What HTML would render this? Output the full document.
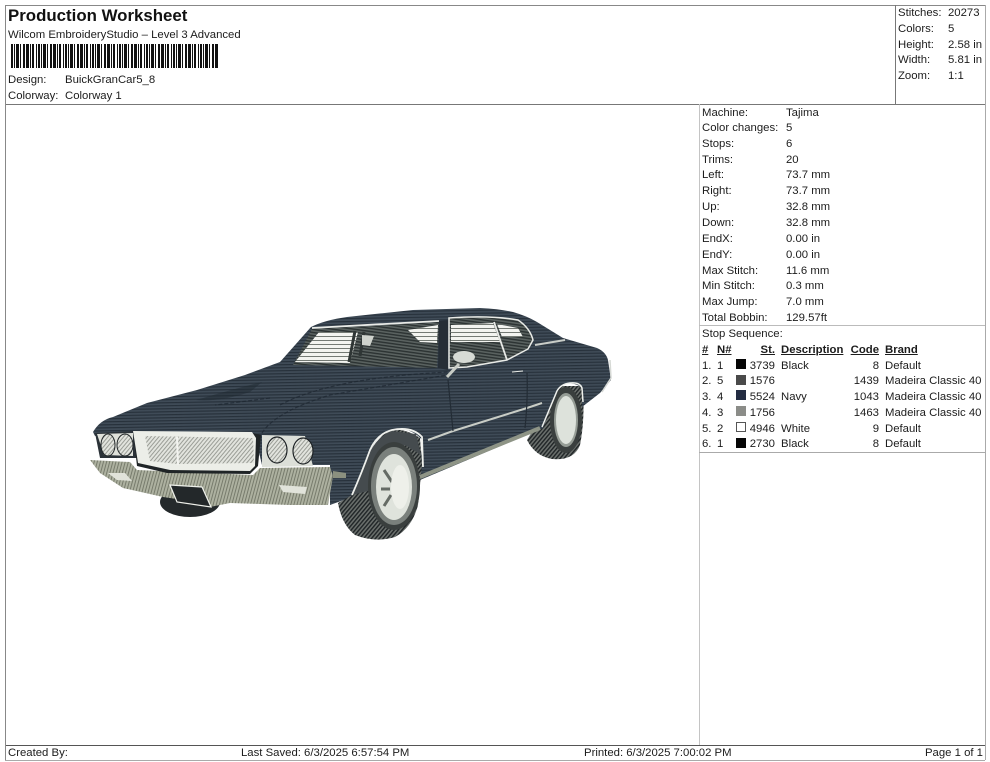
<!DOCTYPE html>
<html><head><meta charset="utf-8"><style>
html,body{margin:0;padding:0;background:#fff}
#p{position:relative;width:990px;height:762px;overflow:hidden;background:#fff;font:11.35px/14px "Liberation Sans",sans-serif;color:#1c1c1c;filter:blur(.3px)}
#p span{position:absolute;white-space:nowrap;margin-top:1px}
#p span.f{margin-top:0}
.l{position:absolute;background:#777}
.r{text-align:right}
b{font-weight:700}
.sw{position:absolute;width:10px;height:10px;box-sizing:border-box}
#bar{position:absolute;left:11px;top:44px;width:208px;height:24px;background:repeating-linear-gradient(90deg,#111 0 2px,#fff 2px 3px,#111 3px 4px,#fff 4px 5px,#111 5px 8px,#fff 8px 9px,#111 9px 10px,#fff 10px 12px,#111 12px 14px,#fff 14px 15px,#111 15px 18px,#fff 18px 19px,#111 19px 20px,#fff 20px 21px,#111 21px 23px,#fff 23px 25px,#111 25px 26px,#fff 26px 27px)}
u{text-decoration:underline}
</style></head><body><div id="p">
<div class="l" style="left:5px;top:5px;width:980px;height:1px;background:#888"></div>
<div class="l" style="left:5px;top:104px;width:980px;height:1px"></div>
<div class="l" style="left:5px;top:745px;width:980px;height:1px;background:#555"></div>
<div class="l" style="left:5px;top:760px;width:980px;height:1px;background:#aaa"></div>
<div class="l" style="left:5px;top:5px;width:1px;height:755px;background:#888"></div>
<div class="l" style="left:985px;top:5px;width:1px;height:755px;background:#aaa"></div>
<div class="l" style="left:895px;top:5px;width:1px;height:99px"></div>
<div class="l" style="left:699px;top:104px;width:1px;height:641px;background:#c4c4c4"></div>
<div class="l" style="left:699px;top:325px;width:286px;height:1px;background:#bbb"></div>
<div class="l" style="left:699px;top:452px;width:286px;height:1px;background:#aaa"></div>

<span style="left:8px;top:5px;font-size:16.85px;line-height:19px;font-weight:700;color:#111">Production Worksheet</span>
<span style="left:8px;top:27px">Wilcom EmbroideryStudio – Level 3 Advanced</span>
<div id="bar"></div>
<span style="left:8px;top:72px">Design:</span><span style="left:65px;top:72px">BuickGranCar5_8</span>
<span style="left:8px;top:88px">Colorway:</span><span style="left:65px;top:88px">Colorway 1</span>

<span style="left:898px;top:5px">Stitches:</span><span style="left:948px;top:5px">20273</span>
<span style="left:898px;top:21px">Colors:</span><span style="left:948px;top:21px">5</span>
<span style="left:898px;top:37px">Height:</span><span style="left:948px;top:37px">2.58 in</span>
<span style="left:898px;top:52px">Width:</span><span style="left:948px;top:52px">5.81 in</span>
<span style="left:898px;top:68px">Zoom:</span><span style="left:948px;top:68px">1:1</span>

<span style="left:702px;top:105px">Machine:</span><span style="left:786px;top:105px">Tajima</span>
<span style="left:702px;top:120px">Color changes:</span><span style="left:786px;top:120px">5</span>
<span style="left:702px;top:136px">Stops:</span><span style="left:786px;top:136px">6</span>
<span style="left:702px;top:152px">Trims:</span><span style="left:786px;top:152px">20</span>
<span style="left:702px;top:167px">Left:</span><span style="left:786px;top:167px">73.7 mm</span>
<span style="left:702px;top:183px">Right:</span><span style="left:786px;top:183px">73.7 mm</span>
<span style="left:702px;top:199px">Up:</span><span style="left:786px;top:199px">32.8 mm</span>
<span style="left:702px;top:215px">Down:</span><span style="left:786px;top:215px">32.8 mm</span>
<span style="left:702px;top:231px">EndX:</span><span style="left:786px;top:231px">0.00 in</span>
<span style="left:702px;top:247px">EndY:</span><span style="left:786px;top:247px">0.00 in</span>
<span style="left:702px;top:263px">Max Stitch:</span><span style="left:786px;top:263px">11.6 mm</span>
<span style="left:702px;top:278px">Min Stitch:</span><span style="left:786px;top:278px">0.3 mm</span>
<span style="left:702px;top:294px">Max Jump:</span><span style="left:786px;top:294px">7.0 mm</span>
<span style="left:702px;top:310px">Total Bobbin:</span><span style="left:786px;top:310px">129.57ft</span>

<span style="left:702px;top:326px">Stop Sequence:</span>
<span style="left:702px;top:342px"><b><u>#</u></b></span><span style="left:717px;top:342px"><b><u>N#</u></b></span>
<span class="r" style="right:215px;top:342px"><b><u>St.</u></b></span>
<span style="left:781px;top:342px"><b><u>Description</u></b></span>
<span class="r" style="right:111px;top:342px"><b><u>Code</u></b></span>
<span style="left:885px;top:342px"><b><u>Brand</u></b></span>

<span style="left:702px;top:358px">1.</span><span style="left:717px;top:358px">1</span><div class="sw" style="left:736px;top:359px;background:#050505"></div><span class="r" style="right:215px;top:358px">3739</span><span style="left:781px;top:358px">Black</span><span class="r" style="right:111px;top:358px">8</span><span style="left:885px;top:358px">Default</span>
<span style="left:702px;top:373px">2.</span><span style="left:717px;top:373px">5</span><div class="sw" style="left:736px;top:375px;background:#4a4a4a"></div><span class="r" style="right:215px;top:373px">1576</span><span class="r" style="right:111px;top:373px">1439</span><span style="left:885px;top:373px">Madeira Classic 40</span>
<span style="left:702px;top:389px">3.</span><span style="left:717px;top:389px">4</span><div class="sw" style="left:736px;top:390px;background:#232c42"></div><span class="r" style="right:215px;top:389px">5524</span><span style="left:781px;top:389px">Navy</span><span class="r" style="right:111px;top:389px">1043</span><span style="left:885px;top:389px">Madeira Classic 40</span>
<span style="left:702px;top:405px">4.</span><span style="left:717px;top:405px">3</span><div class="sw" style="left:736px;top:406px;background:#8b8c88"></div><span class="r" style="right:215px;top:405px">1756</span><span class="r" style="right:111px;top:405px">1463</span><span style="left:885px;top:405px">Madeira Classic 40</span>
<span style="left:702px;top:421px">5.</span><span style="left:717px;top:421px">2</span><div class="sw" style="left:736px;top:422px;background:#fff;border:1px solid #555"></div><span class="r" style="right:215px;top:421px">4946</span><span style="left:781px;top:421px">White</span><span class="r" style="right:111px;top:421px">9</span><span style="left:885px;top:421px">Default</span>
<span style="left:702px;top:436px">6.</span><span style="left:717px;top:436px">1</span><div class="sw" style="left:736px;top:438px;background:#050505"></div><span class="r" style="right:215px;top:436px">2730</span><span style="left:781px;top:436px">Black</span><span class="r" style="right:111px;top:436px">8</span><span style="left:885px;top:436px">Default</span>

<span class="f" style="left:8px;top:746px">Created By:</span>
<span class="f" style="left:241px;top:746px">Last Saved: 6/3/2025 6:57:54 PM</span>
<span class="f" style="left:584px;top:746px">Printed: 6/3/2025 7:00:02 PM</span>
<span class="r f" style="right:7px;top:746px">Page 1 of 1</span>

<svg width="990" height="762" style="position:absolute;left:0;top:0" xmlns="http://www.w3.org/2000/svg">
<defs>
<pattern id="body" width="3" height="3" patternUnits="userSpaceOnUse" patternTransform="rotate(-1)"><rect width="3" height="3" fill="#3f4b57"/><rect width="3" height="1.2" fill="#27313b"/></pattern>
<pattern id="bump" width="3" height="3" patternUnits="userSpaceOnUse" patternTransform="rotate(15)"><rect width="3" height="3" fill="#adb1a0"/><rect width="1" height="3" fill="#777b6c"/></pattern>
<pattern id="hatch" width="3" height="3" patternUnits="userSpaceOnUse" patternTransform="rotate(40)"><rect width="3" height="3" fill="#e2e4de"/><rect width="1" height="3" fill="#9a9d96"/></pattern>
<pattern id="tire" width="3" height="3" patternUnits="userSpaceOnUse" patternTransform="rotate(40)"><rect width="3" height="3" fill="#6a6f6c"/><rect width="1.4" height="3" fill="#1f2426"/></pattern>
<pattern id="glass" width="4" height="4" patternUnits="userSpaceOnUse"><rect width="4" height="4" fill="#f3f4f0"/><rect width="4" height="1" fill="#747a74"/></pattern>
<pattern id="inner" width="3" height="3" patternUnits="userSpaceOnUse" patternTransform="rotate(8)"><rect width="3" height="3" fill="#5a6260"/><rect width="3" height="1.4" fill="#2b3232"/></pattern>
</defs>

<!-- front-left wheel under bumper -->
<ellipse cx="190" cy="502" rx="30" ry="15" fill="#24292b"/>

<!-- rear wheel -->
<path d="M527 440 Q535 456 552 459 Q574 461 580 445 Q585 420 583 386 L560 386 Z" fill="url(#tire)"/>
<ellipse cx="566" cy="420" rx="16" ry="33" fill="#3a3f3e"/>
<ellipse cx="566" cy="420" rx="12" ry="27" fill="#959c95"/>
<ellipse cx="566" cy="420" rx="10" ry="24" fill="#dde2db"/>

<!-- body -->
<path d="M93 432 Q100 420 113 417 L147 403 L197 390 L245 375 L280 362 L311 327 Q325 320 347 317 L413 310 L480 308 Q500 309 513 312 Q527 316 537 322 L563 338 L597 348 Q606 352 608 360 L611 380 L600 393 L582 407 L582 388 Q575 382 566 384 Q558 388 555 395 L543 428 L420 480 L422 440 Q412 428 395 429 Q380 432 372 448 L352 497 L330 505 L330 465 L262 465 L255 436 L95 436 Z" fill="url(#body)"/>

<!-- front wheel -->
<path d="M338 503 Q342 525 355 535 Q375 543 395 537 Q412 528 418 505 L422 465 L420 438 Q405 428 390 430 Q378 436 370 455 L352 495 Z" fill="url(#tire)"/>
<path d="M352 495 L370 452 Q378 436 392 431 L416 434 L421 455 L405 445 L385 455 L372 490 Z" fill="#454b4e"/>
<ellipse cx="394" cy="486" rx="26" ry="44" fill="#3a3f3e"/>
<ellipse cx="394" cy="486" rx="23" ry="39" fill="#7a807c"/>
<ellipse cx="394" cy="487" rx="18" ry="33" fill="#dfe3dc"/>
<g stroke="#656b65" stroke-width="3" fill="none"><path d="M384 470 L392 482M381 489 L390 489M384 506 L391 495"/></g>
<ellipse cx="400" cy="487" rx="9" ry="22" fill="#eef0ea"/>

<!-- arches -->
<path d="M352 495 Q362 472 370 450 Q377 434 392 430 Q412 426 422 437 L423 467" fill="none" stroke="#eef0ec" stroke-width="1.8"/>
<path d="M542 427 L557 391 Q561 384 570 383 Q580 382 582 388 L583 402" fill="none" stroke="#eef0ec" stroke-width="1.5"/>

<!-- sill & trim -->
<path d="M420 477 L540 428" stroke="#8e9486" stroke-width="4" fill="none"/>
<path d="M428 440 L453 431 L527 408 L542 403" stroke="#c9cdc6" stroke-width="2" fill="none"/>
<path d="M448 380 L453 431M527 373 Q528 400 525 428" stroke="#232c35" stroke-width="1.2" fill="none"/>
<path d="M512 372 L523 371" stroke="#eceee9" stroke-width="1"/>
<path d="M535 345 L565 340" stroke="#c9cdc8" stroke-width="2"/>
<path d="M610 360 L611 378 L602 392" stroke="#d6d9d5" stroke-width="1.5" fill="none"/>

<!-- hood creases -->
<g stroke="#1d2630" stroke-width="1.2" stroke-dasharray="4 2" fill="none" opacity=".7">
<path d="M262 433 Q275 412 330 395 L447 375"/>
<path d="M270 398 Q240 402 215 405"/>
<path d="M280 405 Q330 378 448 372"/>
</g>
<path d="M196 400 Q230 390 262 382 L250 392 Q220 402 196 400 Z" fill="#202932" opacity=".5"/>

<!-- windshield -->
<path d="M312 329 L439 322 L437 368 L345 366 L293 365 Z" fill="url(#inner)"/>
<path d="M319 332 L358 332 L350 363 L295 362 Z" fill="url(#glass)"/>
<path d="M408 330 L438 325 L437 343 L420 342 Z" fill="url(#glass)"/>
<path d="M355 331 L349 362 M364 332 L360 356" stroke="#2f3635" stroke-width="3"/>
<path d="M362 335 L374 336 L370 346 L362 345 Z" fill="#cfd3cd"/>
<path d="M312 328 L439 321" stroke="#e9ebe7" stroke-width="1.8"/>
<path d="M439 321 L449 320 L448 370 L438 368 Z" fill="#262e36"/>

<!-- side window -->
<path d="M449 318 Q490 315 518 320 Q530 328 533 340 L528 349 L507 360 L467 367 L449 368 Z" fill="url(#inner)" stroke="#e9ebe7" stroke-width="1.5"/>
<path d="M451 325 L493 323 L500 342 L451 342 Z" fill="url(#glass)"/>
<path d="M497 324 L518 328 L523 337 L502 337 Z" fill="url(#glass)"/>
<path d="M494 322 L507 360" stroke="#e9ebe7" stroke-width="1.8"/>
<ellipse cx="464" cy="357" rx="11" ry="6" fill="#d7dbd5"/>
<path d="M459 364 L447 377" stroke="#c9cdc6" stroke-width="3"/>

<!-- bumper -->
<path d="M333 471 L346 473 L346 478 L333 478 Z" fill="#8b907f"/>
<path d="M90 460 L130 462 L137 470 L253 475 L260 468 L330 467 L333 476 L328 505 L290 505 L230 503 L210 507 L190 501 L163 497 L123 488 L100 473 Z" fill="url(#bump)"/>
<path d="M170 485 L202 487 L211 507 L177 502 Z" fill="#23282a" stroke="#eef0ea" stroke-width="1.2"/>
<path d="M108 473 L125 473 L132 481 L117 480 Z" fill="#e1e3da"/>
<path d="M279 485 L307 487 L305 494 L283 492 Z" fill="#e1e3da"/>

<!-- lights -->
<path d="M95 433 L133 431 L137 458 L100 458 Z" fill="#2b3238"/>
<path d="M97 434 L133 433 L133 456 L104 455 Z" fill="#dfe1da"/>
<ellipse cx="108" cy="445" rx="7" ry="11" fill="url(#hatch)" stroke="#23282a"/>
<ellipse cx="125" cy="445" rx="8" ry="11" fill="url(#hatch)" stroke="#23282a"/>
<path d="M262 435 L305 436 L313 466 L262 467 Z" fill="#dcdfd8"/>
<ellipse cx="277" cy="450" rx="10" ry="13" fill="url(#hatch)" stroke="#1d2225" stroke-width="1.2"/>
<ellipse cx="303" cy="451" rx="10" ry="13" fill="url(#hatch)" stroke="#1d2225" stroke-width="1.2"/>

<!-- grille -->
<path d="M133 431 L253 433 L261 435 L258 466 L250 474 L167 473 L137 466 Z" fill="#1f2426"/>
<path d="M133 431 L252 432 L256 438 L255 466 L250 471 L170 470 L138 463 Z" fill="#eceee8"/>
<path d="M145 436 L253 438 L254 463 L178 464 L150 461 Z" fill="url(#hatch)"/>
<path d="M177 437 L178 465" stroke="#f2f3ef" stroke-width="2"/>
</svg>
</div></body></html>
